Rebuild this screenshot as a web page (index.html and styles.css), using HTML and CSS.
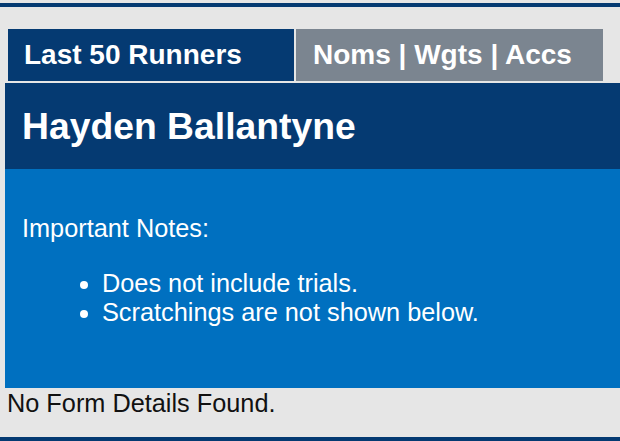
FILE: index.html
```html
<!DOCTYPE html>
<html lang="en">
<head>
<meta charset="utf-8">
<title>Hayden Ballantyne</title>
<link rel="stylesheet" href="styles.css">
</head>
<body>
<div class="page">
  <nav class="tabs">
    <a class="tab tab-active" href="#">Last 50 Runners</a>
    <a class="tab tab-other" href="#">Noms | Wgts | Accs</a>
  </nav>
  <div class="panel">
    <h1 class="panel-title">Hayden Ballantyne</h1>
    <div class="panel-body">
      <p class="notes-title">Important Notes:</p>
      <ul class="notes">
        <li>Does not include trials.</li>
        <li>Scratchings are not shown below.</li>
      </ul>
    </div>
  </div>
  <p class="empty">No Form Details Found.</p>
</div>
</body>
</html>
```

FILE: styles.css
```css
html, body {
  margin: 0;
  padding: 0;
  background: #e6e6e6;
}
body {
  font-family: "Liberation Sans", Arial, sans-serif;
  padding-top: 3px;
}
.page {
  border-top: 4px solid #053a72;
  border-bottom: 4px solid #053a72;
  height: 438px;
  box-sizing: border-box;
  display: flex;
  flex-direction: column;
}
.tabs {
  display: flex;
  gap: 2px;
  margin: 22px 0 0 8px;
  height: 52px;
}
.tab {
  display: flex;
  align-items: center;
  padding-left: 16px;
  color: #ffffff;
  text-decoration: none;
  font-weight: bold;
  font-size: 28px;
  box-sizing: border-box;
}
.tab-active {
  width: 286px;
  background: #053a72;
}
.tab-other {
  width: 307px;
  padding-left: 17px;
  background: #7b8590;
}
.panel {
  margin: 2px 0 0 5px;
}
.panel-title {
  margin: 0;
  height: 86px;
  background: #053a72;
  color: #ffffff;
  font-size: 37.3px;
  font-weight: bold;
  display: flex;
  align-items: center;
  padding-left: 17px;
  box-sizing: border-box;
}
.panel-body {
  height: 219px;
  background: #0070c0;
  color: #ffffff;
  padding: 45px 0 0 17px;
  box-sizing: border-box;
  font-size: 25.3px;
}
.notes-title {
  margin: 0;
  line-height: 28px;
}
.notes {
  margin: 27px 0 0 0;
  padding-left: 80px;
  line-height: 29px;
}
.empty {
  margin: 0;
  padding-left: 7px;
  font-size: 25.3px;
  line-height: 30px;
  color: #111111;
}
```
